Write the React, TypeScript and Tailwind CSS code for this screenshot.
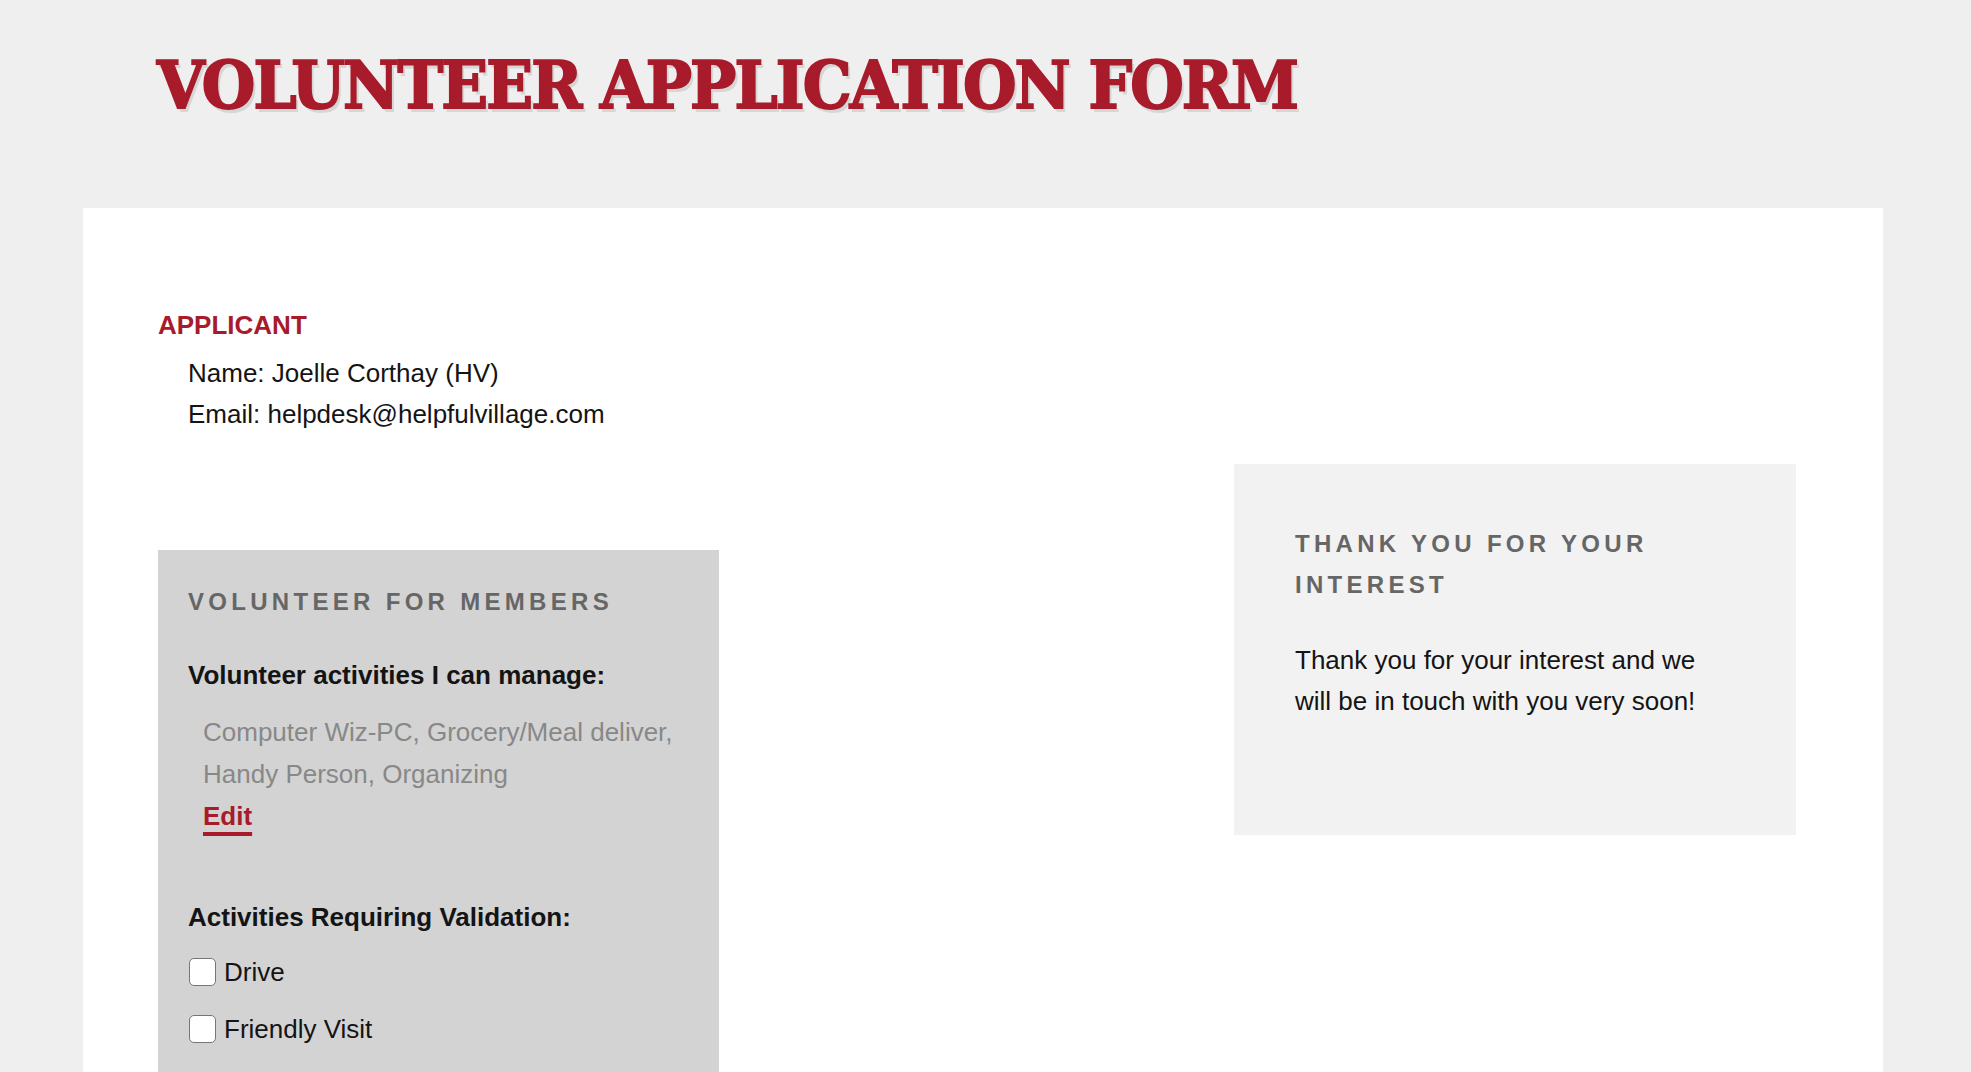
import React from 'react';

const activities = ['Computer Wiz-PC', 'Grocery/Meal deliver', 'Handy Person', 'Organizing'];

const validationActivities = ['Drive', 'Friendly Visit', 'Medical Escort'];

const Checkbox: React.FC<{ label: string }> = ({ label }) => (
  <label className="flex h-[42px] items-center">
    <span className="ml-[1px] mr-[8px] inline-block h-[28px] w-[27px] shrink-0 rounded-[5px] border-[1.5px] border-[#767676] bg-white" />
    <span className="text-[26px] leading-[42px] text-[#141414]">{label}</span>
  </label>
);

const App: React.FC = () => {
  return (
    <div className="min-h-screen bg-[#efefef] font-['Liberation_Sans',Arial,sans-serif]">
      {/* Page title */}
      <header className="h-[208px] pl-[157px] pt-[52px]">
        <h1 className="origin-left scale-x-[0.931] whitespace-nowrap font-['DejaVu_Serif',serif] text-[66px] font-black leading-none tracking-[-2px] text-[#a81b2a] [-webkit-text-stroke:2px_#a81b2a] [text-shadow:3px_4px_0_#d6d6d6]">
          VOLUNTEER APPLICATION FORM
        </h1>
      </header>

      <main className="ml-[83px] w-[1800px] bg-white pl-[75px] pt-[97px] pb-[120px]">
        {/* Applicant details */}
        <section>
          <h2 className="text-[26px] font-bold leading-[41.6px] text-[#a81b2a]">APPLICANT</h2>
          <div className="mt-[6px] pl-[30px] text-[26px] leading-[41px] text-[#141414]">
            <p>Name: Joelle Corthay (HV)</p>
            <p>Email: helpdesk@helpfulvillage.com</p>
          </div>
        </section>

        <div className="mt-[29px] flex w-[1638px] items-start justify-between">
          {/* Member volunteering */}
          <section className="mt-[86px] w-[561px] bg-[#d3d3d3] px-[30px] pt-[32px] pb-[40px]">
            <h3 className="text-[24px] font-bold uppercase leading-[40px] tracking-[4.3px] text-[#666666]">
              Volunteer for Members
            </h3>
            <p className="mt-[33px] text-[26px] font-bold leading-[41.6px] text-[#141414]">
              Volunteer activities I can manage:
            </p>
            <div className="mt-[15px] pl-[15px] text-[26px] leading-[42px]">
              <p className="text-[#888888]">{activities.join(', ')}</p>
              <a
                href="#"
                className="font-bold text-[#a81b2a] underline decoration-[4px] underline-offset-[7px]"
              >
                Edit
              </a>
            </div>
            <p className="mt-[60px] text-[26px] font-bold leading-[41.6px] text-[#141414]">
              Activities Requiring Validation:
            </p>
            <div className="mt-[12px] flex flex-col gap-[15px]">
              {validationActivities.map((item) => (
                <Checkbox key={item} label={item} />
              ))}
            </div>
          </section>

          {/* Confirmation note */}
          <aside className="w-[562px] bg-[#f2f2f2] pl-[61px] pt-[59px] pb-[112px]">
            <h3 className="w-[420px] text-[24px] font-bold uppercase leading-[41px] tracking-[4.3px] text-[#666666]">
              Thank you for your interest
            </h3>
            <p className="mt-[35px] w-[420px] text-[26px] leading-[41.6px] text-[#141414]">
              Thank you for your interest and we will be in touch with you very soon!
            </p>
          </aside>
        </div>
      </main>
    </div>
  );
};

export default App;
